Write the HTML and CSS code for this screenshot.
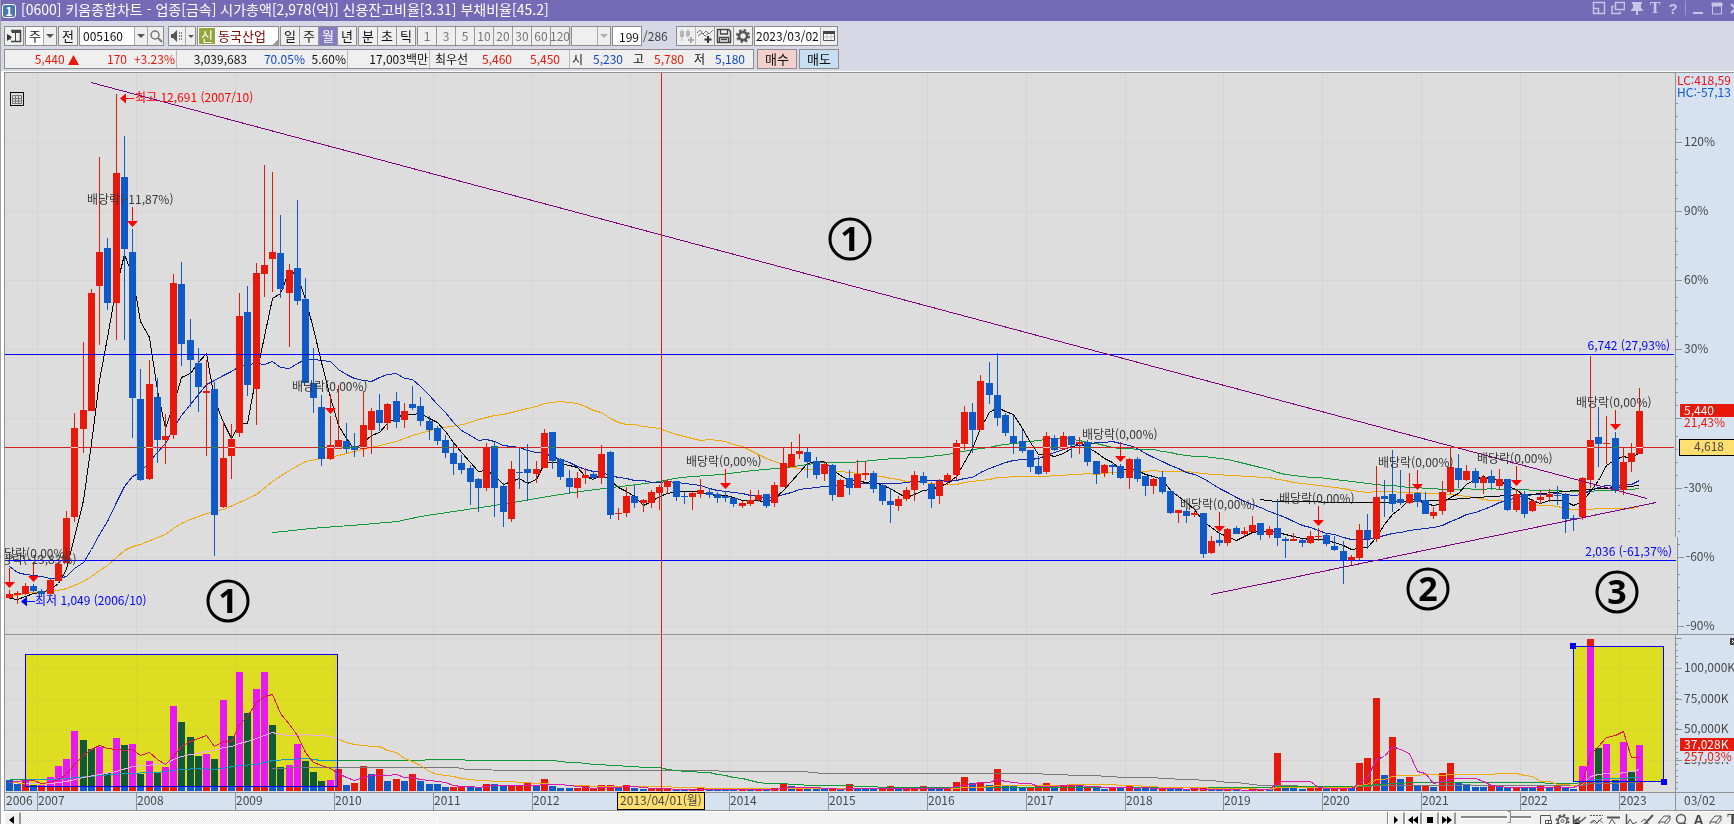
FILE: index.html
```html
<!DOCTYPE html>
<html lang="ko">
<head>
<meta charset="utf-8">
<title>[0600] 키움종합차트</title>
<link rel="stylesheet" href="styles.css">
</head>
<body>
<div class="window">
  <header class="titlebar">
    <span class="badge">1</span>
    <h1 class="title">[0600] 키움종합차트 - 업종[금속] 시가총액[2,978(억)] 신용잔고비율[3.31] 부채비율[45.2]</h1>
    <div class="winbtns">
      <button aria-label="축소"><svg width="14" height="14" viewBox="0 0 14 14"><path d="M1.5 1.5h11v11h-11zM1.5 7.5h5v5" fill="none" stroke="#c9c5e6" stroke-width="1.5"/></svg></button>
      <button aria-label="복제"><svg width="14" height="14" viewBox="0 0 14 14"><path d="M4.5 1.5h9v7h-9zM3 5.500h-2v7h8v-2" fill="none" stroke="#c9c5e6" stroke-width="1.500"/></svg></button>
      <button aria-label="고정"><svg width="14" height="14" viewBox="0 0 14 14"><path d="M2 1h10v2h-1v4l2 2v1H8v4H6v-4H1V9l2-2V3H2z" fill="#c9c5e6"/></svg></button>
      <button aria-label="글꼴" class="glyph">T</button>
      <button aria-label="도움말" class="glyph sans">?</button>
      <span class="sep"></span>
      <button aria-label="최소화"><svg width="14" height="14" viewBox="0 0 14 14"><path d="M2 11h10v2H2z" fill="#c9c5e6"/></svg></button>
      <button aria-label="최대화"><svg width="14" height="14" viewBox="0 0 14 14"><path d="M2.500 3v10h9V3M2 2h10v3H2z" fill="none" stroke="#c9c5e6"/><path d="M2 2h10v3H2z" fill="#c9c5e6"/></svg></button>
      <button aria-label="닫기"><svg width="14" height="14" viewBox="0 0 14 14"><path d="M2 3l9 9M11 3l-9 9" stroke="#c9c5e6" stroke-width="2"/></svg></button>
    </div>
  </header>

  <div class="tools">
    <div class="row controls">
      <button class="btn" aria-label="목록"><svg width="16" height="16" viewBox="0 0 16 16"><path d="M5 2.500h9.500v11H5" fill="none" stroke="#444" stroke-width="1.500"/><path d="M6 3h8v1.500H6zM1 11h4M9.500 5v9" stroke="#444" fill="#444"/><path d="M1 6l5 3-5 4z" fill="#333"/></svg></button>
      <span class="combo period"><select aria-label="종류"><option>주</option></select><i class="arrow"></i></span>
      <button class="btn">전</button>
      <span class="combo code"><input type="text" value="005160" aria-label="종목코드"><i class="arrow"></i><button aria-label="검색"><svg width="14" height="14" viewBox="0 0 14 14"><circle cx="6" cy="6" r="4" fill="none" stroke="#777" stroke-width="1.500"/><path d="M9 9l4 4" stroke="#777" stroke-width="2"/></svg></button></span>
      <span class="combo speaker"><button aria-label="소리"><svg width="14" height="14" viewBox="0 0 14 14"><path d="M1 5h2l4-4v12L3 9H1z" fill="#555"/><path d="M9 4h1M9 7h1M9 10h1M11 4h1M11 7h1M11 10h1" stroke="#555" stroke-width="1.500"/></svg></button><i class="arrow"></i></span>
      <span class="stock"><b>신</b><span>동국산업</span></span>
      <span class="seg"><button>일</button><button>주</button><button class="on">월</button><button>년</button></span>
      <span class="seg"><button>분</button><button>초</button><button>틱</button></span>
      <span class="seg dim"><button>1</button><button>3</button><button>5</button><button>10</button><button>20</button><button>30</button><button>60</button><button>120</button></span>
      <span class="combo blank"><select aria-label="분 단위" disabled><option></option></select><i class="arrow"></i></span>
      <input class="count" type="text" value="199" aria-label="봉 개수">
      <span class="total">/286</span>
      <span class="seg icons">
        <button aria-label="비교"><svg width="16" height="16" viewBox="0 0 16 16"><path d="M4 1v12M10 1v9" stroke="#b5b5b5"/><path d="M2 3h4v6H2zM8 3h4v5H8z" fill="#b5b5b5"/><path d="M13 9v6M10 12h6" stroke="#aaa" stroke-width="2"/></svg></button>
        <button aria-label="지표 추가"><svg width="16" height="16" viewBox="0 0 16 16"><path d="M0 5l3-3 3 4 3-3 3 3 4-4M1 8l4-3 3 3 4-3" fill="none" stroke="#777"/><path d="M11 8v7M7.500 11.500h7" stroke="#333" stroke-width="2"/></svg></button>
        <button aria-label="저장"><svg width="16" height="16" viewBox="0 0 16 16"><path d="M1.500 1.500h11l2 2v11h-13z" fill="none" stroke="#444" stroke-width="1.500"/><path d="M4.500 2v4h7V2M3.500 14V9.500h9V14M5 11.500h6" fill="none" stroke="#444" stroke-width="1.300"/></svg></button>
        <button aria-label="설정"><svg width="16" height="16" viewBox="0 0 16 16"><circle cx="8" cy="8" r="4" fill="none" stroke="#555" stroke-width="2.500"/><circle cx="8" cy="8" r="6" fill="none" stroke="#555" stroke-width="2" stroke-dasharray="2.400 2.300"/></svg></button>
      </span>
      <span class="combo date"><input type="text" value="2023/03/02" aria-label="날짜"><button aria-label="달력"><svg width="14" height="14" viewBox="0 0 14 14"><path d="M1.500 2.500h11v9h-11z" fill="#fff" stroke="#555"/><path d="M1 2h12v3H1z" fill="#444"/><path d="M5 5v6M9 5v6M2 8h10" stroke="#bbb"/></svg></button></span>
    </div>
    <div class="row quotes">
      <div class="quote">
        <div class="cell c1"><span class="up">5,440 <svg width="11" height="10" viewBox="0 0 11 10"><path d="M5.500 0L11 10H0z" fill="#e8180a"/></svg></span><span class="up">170</span><span class="up">+3.23%</span></div>
        <div class="cell c2"><span>3,039,683</span><span class="down">70.05%</span><span>5.60%</span></div>
        <div class="cell c3"><span>17,003백만</span></div>
        <div class="cell c4"><span>최우선</span><span class="up">5,460</span><span class="up">5,450</span></div>
        <div class="cell c5"><span>시</span><span class="down">5,230</span><span>고</span><span class="up">5,780</span><span>저</span><span class="down">5,180</span></div>
      </div>
      <button class="trade buy">매수</button>
      <button class="trade sell">매도</button>
    </div>
  </div>

  <main class="board">
    <svg class="chart" viewBox="4 72 1730 739" role="img" aria-label="동국산업 월봉 차트">
      <defs>
        <clipPath id="plot"><rect x="5" y="73" width="1670" height="719"/></clipPath>
      </defs>
      <rect x="4" y="72" width="1730" height="739" fill="#ddd"/>
      <g id="grid"></g>
      <rect x="1676" y="73" width="58" height="738" fill="#d6e2f0"/>
      <rect x="5" y="792" width="1729" height="18" fill="#d6e2f0"/>
      <g id="lines" clip-path="url(#plot)"></g>
      <g id="candles"></g>
      <g id="volume"></g>
      <g class="hline"><path d="M5 354.500H1674M5 560.500H1676" stroke="#00f"/></g>
      <path d="M91 82.500L1647 498.500M1211 594.500L1656 502.500" stroke="#800080" shape-rendering="crispEdges"/>
      <g class="blend"><rect x="25" y="654" width="313" height="133" fill="#00f"/><rect x="1573" y="646" width="91" height="136" fill="#00f"/></g>
      <g fill="none" stroke="#00f"><rect x="25.500" y="654.500" width="312" height="132"/><rect x="1573.500" y="646.500" width="90" height="135"/></g>
      <path d="M1570 643h6v6h-6zM1661 779h6v6h-6z" fill="#00f"/>
      <path d="M5 447.500H1674M661.500 73V792" stroke="#d42020"/>
      <g id="cross"></g>
      <g id="marks" clip-path="url(#plot)"></g>
      <g class="txt">
        <path d="M120 98.500l6-5v10zM126 98h8v1h-8z" fill="#f00"/><text x="135" y="102" fill="#f00">최고 12,691 (2007/10)</text>
        <path d="M21 601.500l6-5v10zM27 601h8v1h-8z" fill="#00f"/><text x="35" y="605" fill="#00f">최저 1,049 (2006/10)</text>
        <text x="1670" y="350" text-anchor="end" fill="#00f">6,742 (27,93%)</text>
        <text x="1672" y="556" text-anchor="end" fill="#00f">2,036 (-61,37%)</text>
      </g>
      <g class="num">
        <circle cx="228" cy="601" r="20"/><text x="228" y="613">1</text>
        <circle cx="850" cy="239" r="20"/><text x="850" y="251">1</text>
        <circle cx="1428" cy="589" r="20"/><text x="1428" y="601">2</text>
        <circle cx="1617" cy="592" r="20"/><text x="1617" y="604">3</text>
      </g>
      <g fill="none"><rect x="10.500" y="92.500" width="13" height="13" stroke="#000"/><path d="M12.500 95.500h9v8h-9zM15.500 95v9M18.500 95v9M12 98.500h10M12 101h10" stroke="#777"/></g>
      <path d="M4 72.500H1734M4.500 72V811M5 634.500H1734M5 792.500H1734M4 810.500H1734M1675.500 73V537M1677.500 537V634M1675.500 634V811" stroke="#929292" fill="none"/>
      <g id="axis"></g>
      <g class="txt">
        <text x="1677" y="85" fill="#f01010">LC:418,59</text>
        <text x="1677" y="97" fill="#1058c8">HC:-57,13</text>
        <text x="1684" y="764" class="lab">25,000K</text>
        <rect x="1684" y="751" width="50" height="11" fill="#d6e2f0"/>
        <rect x="1680" y="404" width="54" height="13" fill="#e8180a"/><text x="1684" y="415" fill="#fff">5,440</text>
        <text x="1684" y="427" fill="#e8180a">21,43%</text>
        <rect x="1679.500" y="439.500" width="58" height="16" fill="#ffdf70" stroke="#000"/><text x="1694" y="451" class="lab">4,618</text>
        <rect x="1680" y="738" width="54" height="13" fill="#e8180a"/><text x="1684" y="749" fill="#fff">37,028K</text>
        <text x="1684" y="761" fill="#e8180a">257,03%</text>
        <text x="6" y="805" class="lab">2006</text>
        <text x="1684" y="805" class="lab">03/02</text>
        <rect x="1730" y="638" width="7" height="7" fill="#444"/><path d="M1732 640l3 3M1735 640l-3 3" stroke="#fff"/>
        <rect x="617.500" y="792.500" width="87" height="17" fill="#ffdf70" stroke="#000"/><text x="661" y="805" text-anchor="middle" class="lab">2013/04/01(월)</text>
      </g>
    </svg>
  </main>

  <footer class="bottombar">
    <button class="sb" aria-label="왼쪽"><svg width="6" height="8" viewBox="0 0 6 8"><path d="M5 0v8L0 4z"/></svg></button>
    <div class="track"></div>
    <div class="thumb"></div>
    <button class="sb" aria-label="오른쪽"><svg width="6" height="8" viewBox="0 0 6 8"><path d="M1 0v8l4-4z"/></svg></button>
    <button class="sb" aria-label="뒤로"><svg width="10" height="8" viewBox="0 0 10 8"><path d="M5 0v8L0 4zM10 0v8L5 4z"/></svg></button>
    <button class="sb" aria-label="정지"><svg width="8" height="8" viewBox="0 0 8 8"><path d="M1 1h6v6H1z"/></svg></button>
    <button class="sb" aria-label="앞으로"><svg width="10" height="8" viewBox="0 0 10 8"><path d="M0 0v8l5-4zM5 0v8l5-4z"/></svg></button>
    <input class="zoom" type="range" min="0" max="100" value="70" aria-label="확대">
    <div class="drawtools">
      <button aria-label="창"><svg width="15" height="15" viewBox="0 0 15 15"><path d="M2.500 2.500h10v10h-10z"/><path d="M7.500 7.500h6v6h-6zM10.500 7v7M7 10.500h7" fill="#fff"/></svg></button>
      <button aria-label="설정"><svg width="15" height="15" viewBox="0 0 15 15"><circle cx="7.500" cy="8" r="4.500" stroke-width="1.500"/><circle cx="7.500" cy="8" r="6" stroke-width="2" stroke-dasharray="2.300 2.400"/><circle cx="7.500" cy="8" r="1.500"/></svg></button>
      <button aria-label="지표"><svg width="15" height="15" viewBox="0 0 15 15"><path d="M1.500 2v11M1 10l4-4 3 3 6-5M1 6l3 2 4-4" stroke-width="1.500"/><circle cx="5" cy="12" r="3" fill="#222"/></svg></button>
      <button aria-label="영역"><svg width="15" height="15" viewBox="0 0 15 15"><path d="M1 2.500h13M1 13l3-5 3 4 3-5 4 3" stroke-dasharray="2 1"/><path d="M1 10l4-3 3 3 5-5"/></svg></button>
      <button aria-label="수평선"><svg width="15" height="15" viewBox="0 0 15 15"><path d="M1 4.500h13" stroke-width="2"/><path d="M2 13l4-7 3 5 5 3"/></svg></button>
      <button aria-label="수직선"><svg width="15" height="15" viewBox="0 0 15 15"><path d="M3.500 1v13" stroke-width="1.500"/><path d="M4 12l3-6 3 5 4-2"/></svg></button>
      <button aria-label="추세선"><svg width="15" height="15" viewBox="0 0 15 15"><path d="M2 14L13 2" stroke-width="2"/><path d="M1 9l4-3 3 5 5 2"/></svg></button>
      <button aria-label="지우기"><svg width="15" height="15" viewBox="0 0 15 15"><path d="M2 9l5-6h6l-5 6zM2 9v4h6V9M8 13l5-6V3M9 14v-3M12 14v-3"/></svg></button>
      <button aria-label="돋보기"><svg width="15" height="15" viewBox="0 0 15 15"><circle cx="7" cy="6" r="4.500" stroke-width="1.500"/><path d="M10 10l4 4" stroke-width="2"/></svg></button>
      <button aria-label="글자" class="letter">A</button>
      <button aria-label="전체 지우기"><svg width="15" height="15" viewBox="0 0 15 15"><path d="M2 9l5-6h6l-5 6zM2 9v4h6V9M8 13l5-6V3"/></svg></button>
      <button aria-label="문자" class="letter serif">T</button>
    </div>
  </footer>
</div>
<script src="chart.js"></script>
</body>
</html>
```

FILE: styles.css
```css
* { box-sizing: border-box; }
html, body { margin: 0; height: 100%; overflow: hidden; }
body, button, input, select {
  font-family: "Noto Sans CJK KR", sans-serif;
  font-size: 13px;
  line-height: 16px;
  color: #111;
}
button, input, select { margin: 0; padding: 0; border: 0; background: none; }
button { display: flex; align-items: center; justify-content: center; }
svg { display: block; }

.window { display: flex; flex-direction: column; height: 100%; background: #fff; border-left: 1px solid #a0a0a0; }

.titlebar { display: flex; align-items: center; flex: none; height: 21px; padding-left: 1px; background: #746ab6; overflow: hidden; }
.badge { width: 14px; height: 14px; border: 1px solid #fff; border-radius: 3px; background: #4a78b0; color: #fff; font-weight: bold; font-size: 12px; line-height: 12px; text-align: center; }
.title { margin: 0 0 4px 5px; font-size: 14px; line-height: 16px; font-weight: normal; color: #fff; white-space: nowrap; }
.winbtns { display: flex; align-items: center; gap: 5px; margin-left: auto; margin-right: -9px; padding-bottom: 5px; }
.winbtns button { width: 14px; height: 14px; }
.winbtns .glyph { color: #c9c5e6; font: bold 16px "Liberation Serif", serif; width: 12px; }
.winbtns .sans { font: bold 15px "Liberation Sans", sans-serif; width: 14px; }
.sep { width: 1px; height: 14px; background: #9d96cf; }

.tools { flex: none; height: 50px; padding: 5px 4px 0 3px; background: #d8d7e5; }
.row { display: flex; height: 20px; gap: 1px; }
.quotes { margin-top: 3px; gap: 2px; }
.btn, .combo, .seg, .stock, .count, .trade, .quote { border: 1px solid #8c8c8c; background: #efefef; height: 20px; }
.btn { width: 20px; }
.combo { display: flex; }
.combo input, .combo select { flex: 1; min-width: 0; background: #fff; appearance: none; padding-left: 3px; }
.combo input, .count, .total, .dim button { font-size: 12px; }
.combo button, .arrow { flex: none; border-left: 1px solid #aaa; background: #efefef; }
.combo button { width: 16px; }
.arrow { width: 13px; display: flex; align-items: center; justify-content: center; }
.arrow::after { content: ""; border: 4px solid transparent; border-top-color: #555; border-bottom: 0; }
.period { width: 32px; }
.code { width: 85px; }
.speaker { width: 28px; margin-left: 3px; }
.speaker .arrow { width: 10px; }
.speaker .arrow::after { border-width: 3px; border-bottom: 0; }
.speaker button { border-left: 0; }
.stock { display: flex; align-items: center; width: 82px; background: linear-gradient(135deg, transparent 94%, #999 94%), #fff; color: #800000; white-space: nowrap; }
.stock b { width: 16px; height: 16px; margin: 0 3px 0 1px; background: #93a63c; color: #fff; font-weight: normal; line-height: 15px; text-align: center; }
.seg { display: flex; }
.seg button { width: 19px; border-right: 1px solid #999; }
.seg button:last-child { border-right: 0; width: 18px; }
.seg .on { background: #857bc4; color: #fff; }
.dim button { color: #777; }
.blank { width: 40px; }
.blank select { background: #efefef; opacity: 1; }
.blank .arrow::after { border-top-color: #b0b0b0; }
.count { width: 30px; background: #fff; text-align: right; padding-right: 2px; }
.total { width: 32px; line-height: 19px; color: #444; }
.icons button:first-child { border-right-color: #bbb; }
.date { width: 84px; }
.date input { padding-left: 1px; }
.date button { width: 17px; }

.quote { display: flex; width: 750px; font-size: 12px; line-height: 17px; white-space: nowrap; }
.cell { display: flex; border-right: 1px solid #bbb; }
.cell span { text-align: right; width: 48px; }
.cell svg { display: inline-block; vertical-align: -1px; }
.up { color: #e8180a; }
.down { color: #1048c8; }
.c1 { width: 172px; }
.c1 span:first-child { width: 74px; }
.c2 { width: 171px; }
.c2 span:first-child { width: 70px; }
.c2 span:nth-child(2) { width: 58px; }
.c2 span:nth-child(3) { width: 41px; }
.c3 { width: 82px; }
.c3 span { width: 80px; }
.c4 { width: 140px; }
.c4 span:first-child { width: 38px; }
.c4 span:nth-child(2) { width: 44px; }
.c5 { border-right: 0; }
.c5 span { width: 40px; }
.c5 span:nth-child(odd) { width: 21px; }
.c5 span:first-child { width: 13px; }
.trade { width: 40px; margin-right: -1px; margin-left: 1px; }
.buy { background: #f4d0cc; }
.sell { background: #c8def2; }

.board { flex: none; margin-top: 1px; padding-left: 3px; background: #fff; }
.chart { width: 100%; height: auto; }
.txt text, .mark { font-size: 12px; }
.lab { fill: #484848; }
.hline path { shape-rendering: crispEdges; }
.blend rect { mix-blend-mode: difference; }
.num circle { fill: none; stroke: #000; stroke-width: 3px; }
.num text { font: bold 34px "Open Sans", sans-serif; text-anchor: middle; }

.bottombar { display: flex; flex: none; height: 18px; margin-left: 3px; background: #f0f0f0; border-top: 1px solid #fff; }
.sb { flex: none; width: 17px; border: 1px solid #fff; border-right: 2px solid #999; background: #f0f0f0; padding-bottom: 2px; }
.track { flex: 417; background: repeating-conic-gradient(#fff 0 25%, #ebebeb 0 50%) 0 0 / 2px 2px; }
.thumb { flex: 950; background: #f2f2f2; border-left: 1px solid #fff; border-right: 1px solid #888; }
.zoom { flex: none; appearance: none; width: 70px; height: 3px; margin: 4px 6px 0 5px; background: #888; border-bottom: 1px solid #fff; }
.zoom::-webkit-slider-thumb { appearance: none; width: 4px; height: 12px; background: #f0f0f0; border: 1px solid #888; border-left-color: #fff; }
.drawtools { flex: none; display: flex; width: 197px; overflow: hidden; }
.drawtools button { flex: none; width: 17px; height: 16px; }
.drawtools svg { fill: none; stroke: #555; }
.drawtools .letter { color: #444; font: bold 14px "Liberation Sans", sans-serif; }
.drawtools .serif { font-family: "Liberation Serif", serif; font-size: 16px; }
```

FILE: chart.js
```js
// Monthly candles: direction, high, body top, body bottom, low (chart y units)
const CANDLES = `
u590,594,598,599 u591,593,595,604 u583,586,594,595 d584,586,591,592 d589,591,594,596 u579,580,594,595 u560,564,581,581 u511,518,563,563 u413,428,517,522 u342,410,429,453
u289,293,411,411 u157,252,286,345 d238,248,303,310 u94,173,303,340 d136,177,249,340 d229,252,398,438 d369,399,480,481 u360,384,479,480 d378,397,440,463 u414,436,440,464
u274,283,435,439 d262,284,344,366 d319,340,360,407 d348,363,387,412 u360,391,393,456 d382,389,515,556 u422,458,507,508 u424,439,456,479 u293,316,433,437 d286,312,385,396
u263,273,389,425 u165,265,274,297 u172,252,259,292 d215,253,289,298 u264,270,293,347 d200,268,301,305 d278,299,383,383 d348,383,398,413 d395,407,459,466 u416,445,459,460
u385,440,449,449 d423,441,449,453 d433,446,450,457 u391,425,449,457 u408,411,430,454 d394,410,423,431 u403,404,423,430 d392,401,422,428 u403,411,420,428 d386,404,408,410
d397,406,421,426 d416,421,430,440 d426,428,441,445 d435,440,453,458 d443,453,464,475 d455,463,470,474 d465,468,482,505 d478,479,488,512 u443,448,488,491 d442,446,488,517
d483,486,512,527 u461,469,519,522 d447,472,473,489 d444,469,473,501 u461,469,474,483 u429,433,468,468 d432,432,461,469 d458,459,477,480 d470,478,487,494 u472,478,488,498
u468,475,478,484 d471,474,478,480 u445,454,478,484 d451,452,515,519 u508,513,514,520 u487,496,513,517 d485,496,503,508 u499,500,503,512 u490,492,503,508 u485,487,493,510
u479,481,487,494 d481,481,497,501 d492,496,497,504 u492,493,497,510 u479,490,494,498 d488,492,495,498 d492,494,498,503 d491,496,498,502 d498,498,504,507 u501,503,506,508
u490,500,504,506 u490,495,500,502 d494,494,506,508 u482,485,503,507 u448,463,487,487 u442,454,467,467 u434,451,454,459 d448,452,462,478 d457,461,475,479 u461,464,474,481
d464,465,495,501 u479,480,497,497 d470,478,488,495 u460,474,488,488 u461,473,475,480 d471,473,489,493 d484,485,501,505 d488,501,505,523 u496,499,506,511 u487,490,499,501
u471,475,490,501 d472,476,483,485 d482,484,499,508 u479,481,496,504 u473,475,481,485 u440,443,475,480 u406,412,444,450 d403,412,430,453 u375,381,430,430 d362,383,395,404
d353,395,418,426 d413,415,433,436 d415,436,443,454 d430,441,451,453 d450,450,467,472 d456,466,474,475 u432,436,472,474 d435,438,450,451 u432,436,449,450 d436,436,445,458
u437,442,444,454 d440,442,462,466 d461,461,474,484 u464,465,473,477 d464,465,467,475 d464,466,478,479 u458,459,478,489 d457,459,479,482 d476,476,486,496 u478,479,486,494
d471,477,492,494 d489,491,513,514 u510,510,513,523 d508,511,516,523 u511,513,515,517 d513,513,554,558 u536,541,553,554 d534,540,543,546 u528,529,543,546 d526,528,534,534
u527,531,534,537 u516,525,532,532 d523,523,535,540 u526,529,535,538 d499,528,538,546 d537,539,541,558 u533,539,541,541 d539,540,543,547 u531,536,543,544 u528,536,537,541
d533,535,544,546 d536,546,550,551 d541,551,560,584 u555,557,560,566 u524,530,558,560 d514,530,539,549 u466,497,539,542 d480,496,499,517 d450,494,504,512 d470,499,503,505
u473,494,503,504 d492,493,502,507 d492,500,514,514 u507,512,516,519 u481,492,511,515 u447,467,492,494 d454,468,480,488 u465,471,480,481 d468,471,483,488 u475,477,483,494
d470,476,483,490 u469,479,486,490 d479,479,510,511 u489,494,510,512 d491,494,514,518 u499,501,511,512 u490,497,500,504 u489,494,497,502 d486,495,496,505 d493,495,519,533
d515,518,520,531 u477,478,517,520 u356,440,480,488 d407,437,444,467 u416,443,444,464 d432,438,490,493 u447,462,490,495 u443,453,462,472 u388,411,454,454
`.trim().split(/\s+/).map(s => ({ up: s[0] === 'u', v: s.slice(1).split(',').map(Number) }));

// Volume bars: colour and height
const VOLUMES = `
d11 d7 u11 d6 u6 u14 u25 u32 u60 d51 d42 u44 d18 u53 d46 u47 d17 u30 d18 u24
u85 d69 d54 d35 u37 d32 u91 d55 u119 d78 u102 u119 d66 d24 u26 u47 d30 d19 d10 u11
u22 d6 u8 u25 d17 u22 d10 u12 d10 u17 d10 d7 d7 d4 u4 u5 d5 d4 u7 d7
d5 u5 u5 u9 d6 u12 d5 d3 d3 u3 u5 u2 u6 u6 d3 u6 d3 d2 u2 u3
u3 d2 d2 u2 u3 d2 d2 d2 d2 u2 d2 u2 d2 u3 u8 d5 u4 d2 d2 d2
u3 d2 u7 d2 d2 d2 u3 u5 d2 u2 u2 u5 d3 d3 u3 u9 u14 d8 u9 d6
u22 d5 d5 d3 u4 u6 u8 d5 u5 u6 d5 u4 d5 d2 u4 d3 u5 d3 d3 d2
u4 d2 d2 d2 u3 u3 d1 d1 u2 d1 d1 u2 u2 d2 u38 d5 d3 d2 u4 u4
d2 u3 u3 d4 u28 u33 u93 d16 u54 d12 u14 d6 u6 d4 u18 u28 d8 d6 d4 d4
u6 d4 d4 u4 d3 d3 u6 d3 u5 d3 d2 u25 u152 d43 u47 d11 u49 d19 u46
`.trim().split(/\s+/).map(s => ({ up: s[0] === 'u', h: +s.slice(1) }));

const RED = '#e8180a', BLUE = '#105ac8';
const cx = i => Math.floor(9 + 8.236 * i);
const put = (id, html) => { document.getElementById(id).innerHTML += html; };
const rect = (x, y, w, h, f) => `<rect x="${x}" y="${y}" width="${w}" height="${h}" fill="${f}"/>`;
const poly = (pts, c) => `<polyline points="${pts.map(p => p.join()).join(' ')}" fill="none" stroke="${c}" shape-rendering="crispEdges"/>`;
const average = (vals, n, map) => vals.map((_, i) => i < n - 1 ? null :
  [cx(i) + 0.5, Math.round(map(vals.slice(i - n + 1, i + 1).reduce((a, b) => a + b) / n)) + 0.5]).filter(Boolean);
const pairs = s => s.split(' ').map(p => p.split(',').map(v => +v + 0.5));

// Grid
const years = [...Array(17)].map((_, k) => cx(4 + 12 * k) - 4);
years.forEach(x => put('grid', rect(x, 73, 1, 719, '#d5d5d5')));
[142, 211, 280, 349, 418, 488, 557, 626, 638, 668, 699, 729, 760].forEach(y => put('grid', rect(5, y, 1670, 1, '#d5d5d5')));

// Price averages
const closes = CANDLES.map(c => c.up ? c.v[1] : c.v[2]);
const same = v => v;
put('lines', poly([...pairs('272,532 283,531 310,528 363,524 397,521 420,516 453,511 487,506 507,503 553,495 587,490 620,486 653,482 680,477 720,474 753,470 787,467 820,462 850,462 893,458 920,457 947,454 973,449'), ...average(closes, 120, same)], '#109838'));
put('lines', poly([...pairs('9,596 25,593 41,591 58,590 66,588 74,585 83,581 91,576 99,570 107,565 116,557 124,550 132,546 140,544 157,537 165,534 173,528 181,523 190,519 206,513 223,509 239,502 256,494 272,481 289,470 305,461 321,458 338,455 354,451 371,447 396,441 412,435 437,428 463,424 478,419'), ...average(closes, 60, same)], '#f0a808'));
put('lines', poly([...pairs('9,566 17,572 25,574 41,576 50,578 58,578 66,576 74,568 83,562 91,549 99,534 107,521 116,502 124,486 132,476 140,472 149,461 157,452'), ...average(closes, 20, same)], '#1028b0'));
put('lines', poly([...pairs('9,598 17,599 25,596 33,593'), ...average(closes, 5, same)], '#000'));
put('lines', poly(pairs('1260,499 1275,501 1300,501 1340,502 1380,502 1450,499 1490,496 1530,494 1587,489 1617,487 1639,485'), '#000'));

CANDLES.forEach((c, i) => {
  const [hi, top, bot, lo] = c.v, x = cx(i), f = c.up ? RED : BLUE;
  put('candles', rect(x, hi, 1, Math.max(lo - hi, 1), f) + rect(x - 3, top, 7, Math.max(bot - top, 1), f));
  if (top < 447 && bot > 447) put('cross', rect(x - 3, 447, 7, 1, c.up ? '#f8c8c8' : '#10904a'));
});

// Volume bars and averages
VOLUMES.forEach((b, i) => put('volume', rect(cx(i) - 3, 791 - b.h, 7, b.h, b.up ? RED : BLUE)));
const vols = VOLUMES.map(b => b.h), drop = v => 791 - v;
put('volume', poly([...pairs('272,768 300,767 457,767 460,768 467,769 516,770 703,770 733,771 803,771 822,773 980,773'), ...average(vols, 120, drop)], '#787878'));
put('volume', poly([...pairs('9,779 50,779 66,778 100,775 124,773 156,772 181,769 198,768 214,769 239,765 256,764 272,760 305,758 321,760 408,760 442,759 487,760'), ...average(vols, 60, drop)], '#109838'));
put('volume', poly([...pairs('9,782 25,783 50,783 66,781 83,777 99,774 116,771 132,766 157,764'), ...average(vols, 20, drop)], '#f0a808'));
put('volume', poly([...pairs('9,782 25,780 33,780'), ...average(vols, 5, drop)], '#d818b0'));

// Ex-dividend marks: label x, baseline, text, arrow x, arrow top
[[-7, 558, '0,00', 33, 562], [-10, 564, '-13,83', 9, 568], [87, 204, '-11,87', 132, 207], [292, 391, '0,00', 330, 394],
 [686, 466, '0,00', 725, 469], [1082, 439, '0,00', 1120, 442], [1180, 509, '0,00', 1219, 512], [1279, 503, '0,00', 1318, 506],
 [1378, 467, '0,00', 1417, 470], [1477, 463, '0,00', 1516, 466], [1576, 407, '0,00', 1615, 410]]
  .forEach(([x, y, t, ax, ay]) => put('marks',
    `<text class="mark" x="${x}" y="${y}" fill="#383838">배당락(${t}%)</text>` +
    `<path d="M${ax} ${ay}h1v14h5l-5.500 6-5.500-6h5z" fill="#f00"/>`));

// Axis ticks and labels
const tick = (x, y, w) => rect(x, y, w, 1, '#929292');
const label = (x, y, t) => `<text class="mark lab" x="${x}" y="${y}">${t}</text>`;
[[142, '120%'], [211, '90%'], [280, '60%'], [349, '30%'], [418, ''], [488, '-30%'], [557, '-60%'], [626, '-90%']].forEach(([y, t]) => {
  const x = y > 540 ? 1678 : 1676;
  put('axis', tick(x, y, 6) + label(x + 8, y + 4, t));
  [-13, -26, -39, -52].forEach(d => put('axis', y + d > 100 ? tick(x, y + d, 2) : ''));
});
for (let y = 638; y < 791; y += 6) put('axis', tick(1676, y, 2));
[[638, ''], [668, '100,000K'], [699, '75,000K'], [729, '50,000K'], [760, '']].forEach(([y, t]) => put('axis', tick(1676, y, 6) + label(1684, y + 4, t)));
years.forEach((x, k) => put('axis', rect(x, 793, 1, 17, '#929292') + label(x + 1, 805, k === 6 ? '' : 2007 + k)));
```
